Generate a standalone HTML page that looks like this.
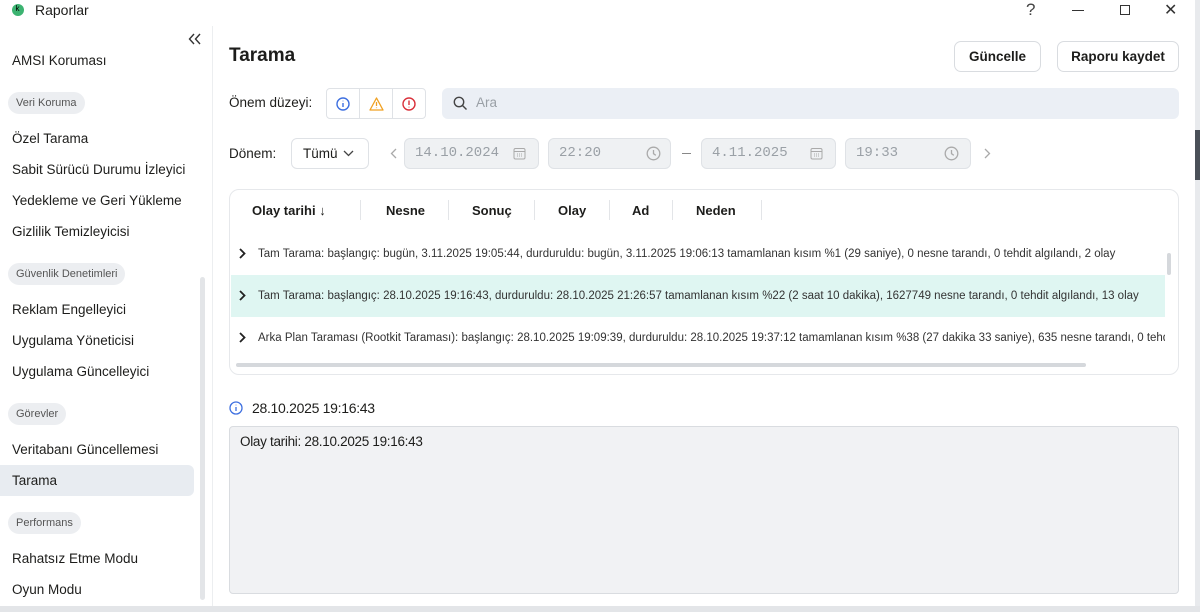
<!DOCTYPE html>
<html><head><meta charset="utf-8"><style>
*{margin:0;padding:0;box-sizing:border-box}
body{width:1200px;height:612px;overflow:hidden;background:#fff;font-family:"Liberation Sans",sans-serif;color:#1d1d1b;position:relative}
.a{position:absolute;white-space:nowrap}
.side{font-size:13.5px;left:12px}
.pill{position:absolute;left:8px;height:22px;border-radius:11px;background:#eceef1;font-size:11px;color:#555;padding:0 8px;line-height:22px}
.btn{position:absolute;top:41px;height:31px;border:1px solid #d9dce0;border-radius:7px;font-size:13.5px;font-weight:bold;text-align:center;line-height:29px}
.fld{position:absolute;top:138px;height:31px;background:#eff1f3;border:1px solid #dfe2e6;border-radius:6px;font-family:"Liberation Mono",monospace;font-size:14px;color:#9aa0a6;line-height:29px;padding-left:10px}
.th{position:absolute;top:203px;font-size:13px;font-weight:bold}
.sep{position:absolute;top:200px;width:1px;height:20px;background:#e3e5e8}
.row{position:absolute;left:231px;width:934px;height:42px;font-size:11.5px;line-height:42px;padding-left:27px;color:#333;overflow:hidden;white-space:nowrap}
.chev{position:absolute;left:8px;top:15px}
</style></head><body>
<!-- title bar -->
<div class="a" style="left:12px;top:4px;width:12px;height:12px;border-radius:50%;background:#3cb371"></div>
<div class="a" style="left:15.5px;top:4px;font-size:8px;color:#000">k</div>
<div class="a" style="left:35px;top:2px;font-size:14px">Raporlar</div>
<div class="a" style="left:1026px;top:0;font-size:17px;color:#444">?</div>
<div class="a" style="left:1072px;top:10px;width:12px;height:1px;background:#333"></div>
<div class="a" style="left:1120px;top:5px;width:10px;height:10px;border:1px solid #333"></div>
<div class="a" style="left:1164px;top:0px;font-size:16px;color:#333">✕</div>
<div class="a" style="left:1195px;top:0;width:5px;height:612px;background:#e8eaed"></div>
<div class="a" style="left:1195px;top:130px;width:5px;height:50px;background:#4a5058"></div>
<!-- sidebar -->
<div class="a" style="left:212px;top:26px;width:1px;height:586px;background:#eceef0"></div>
<svg class="a" style="left:188px;top:33px" width="14" height="12" viewBox="0 0 14 12"><path d="M6 1L1.5 6 6 11M12 1L7.5 6 12 11" fill="none" stroke="#333" stroke-width="1.4"/></svg>
<div class="a side" style="top:53px">AMSI Koruması</div>
<div class="pill" style="top:92px">Veri Koruma</div>
<div class="a side" style="top:131px">Özel Tarama</div>
<div class="a side" style="top:162px">Sabit Sürücü Durumu İzleyici</div>
<div class="a side" style="top:193px">Yedekleme ve Geri Yükleme</div>
<div class="a side" style="top:224px">Gizlilik Temizleyicisi</div>
<div class="pill" style="top:263px">Güvenlik Denetimleri</div>
<div class="a side" style="top:302px">Reklam Engelleyici</div>
<div class="a side" style="top:333px">Uygulama Yöneticisi</div>
<div class="a side" style="top:364px">Uygulama Güncelleyici</div>
<div class="pill" style="top:403px">Görevler</div>
<div class="a side" style="top:442px">Veritabanı Güncellemesi</div>
<div class="a" style="left:0;top:465px;width:194px;height:31px;background:#e8ecf1;border-radius:0 6px 6px 0"></div>
<div class="a side" style="top:473px">Tarama</div>
<div class="pill" style="top:512px">Performans</div>
<div class="a side" style="top:551px">Rahatsız Etme Modu</div>
<div class="a side" style="top:582px">Oyun Modu</div>
<div class="a" style="left:200px;top:277px;width:5px;height:323px;background:#e3e5e8;border-radius:3px"></div>
<div class="a" style="left:0;top:606px;width:1200px;height:6px;background:#e3e5e8"></div>
<!-- header -->
<div class="a" style="left:229px;top:45px;font-size:19px;font-weight:bold">Tarama</div>
<div class="btn" style="left:954px;width:87px">Güncelle</div>
<div class="btn" style="left:1057px;width:122px">Raporu kaydet</div>
<!-- severity -->
<div class="a" style="left:229px;top:95px;font-size:13.5px">Önem düzeyi:</div>
<div class="a" style="left:326px;top:88px;width:100px;height:31px;border:1px solid #dfe2e6;border-radius:4px;display:flex">
 <div style="flex:1;border-right:1px solid #dfe2e6;display:flex;align-items:center;justify-content:center"><svg width="14" height="14" viewBox="0 0 14 14"><circle cx="7" cy="7" r="6" fill="none" stroke="#3d6fe0" stroke-width="1.4"/><path d="M7 6v4M7 3.8v.5" stroke="#3d6fe0" stroke-width="1.4"/></svg></div>
 <div style="flex:1;border-right:1px solid #dfe2e6;display:flex;align-items:center;justify-content:center"><svg width="15" height="14" viewBox="0 0 15 14"><path d="M7.5 1L14 13H1z" fill="none" stroke="#f0a020" stroke-width="1.3" stroke-linejoin="round"/><path d="M7.5 5v4M7.5 10.5v.6" stroke="#f0a020" stroke-width="1.3"/></svg></div>
 <div style="flex:1;display:flex;align-items:center;justify-content:center"><svg width="14" height="14" viewBox="0 0 14 14"><circle cx="7" cy="7" r="6" fill="none" stroke="#d9303a" stroke-width="1.4"/><path d="M7 3.5v4.5M7 9.8v.6" stroke="#d9303a" stroke-width="1.4"/></svg></div>
</div>
<div class="a" style="left:442px;top:88px;width:737px;height:31px;background:#ebeff5;border-radius:6px"></div>
<svg class="a" style="left:453px;top:96px" width="15" height="15" viewBox="0 0 15 15"><circle cx="6" cy="6" r="4.7" fill="none" stroke="#444" stroke-width="1.4"/><path d="M9.5 9.5L13.5 13.5" stroke="#444" stroke-width="1.4"/></svg>
<div class="a" style="left:476px;top:95px;font-size:13.5px;color:#9aa0a6">Ara</div>
<!-- period -->
<div class="a" style="left:229px;top:146px;font-size:13.5px">Dönem:</div>
<div class="a" style="left:291px;top:138px;width:78px;height:31px;border:1px solid #dfe2e6;border-radius:6px;font-size:13.5px;line-height:29px;padding-left:11px">Tümü</div>
<svg class="a" style="left:343px;top:150px" width="11" height="7" viewBox="0 0 11 7"><path d="M1 1l4.5 4.5L10 1" fill="none" stroke="#444" stroke-width="1.3"/></svg>
<svg class="a" style="left:390px;top:148px" width="7" height="11" viewBox="0 0 7 11"><path d="M6 1L1.5 5.5 6 10" fill="none" stroke="#aaa" stroke-width="1.3"/></svg>
<div class="fld" style="left:404px;width:135px">14.10.2024</div>
<div class="fld" style="left:548px;width:123px">22:20</div>
<div class="a" style="left:682px;top:153px;width:9px;height:1px;background:#888"></div>
<div class="fld" style="left:701px;width:135px">4.11.2025</div>
<div class="fld" style="left:845px;width:126px">19:33</div>
<svg class="a" style="left:984px;top:148px" width="7" height="11" viewBox="0 0 7 11"><path d="M1 1l4.5 4.5L1 10" fill="none" stroke="#aaa" stroke-width="1.3"/></svg>
<svg class="a" style="left:513px;top:147px" width="13" height="13" viewBox="0 0 13 13"><rect x="1" y="1.5" width="11" height="10.5" rx="1.5" fill="none" stroke="#aaa"/><path d="M1 4.5h11M4 7h1M6 7h1M8 7h1M4 9h1M6 9h1M8 9h1" stroke="#aaa"/></svg>
<svg class="a" style="left:810px;top:147px" width="13" height="13" viewBox="0 0 13 13"><rect x="1" y="1.5" width="11" height="10.5" rx="1.5" fill="none" stroke="#aaa"/><path d="M1 4.5h11M4 7h1M6 7h1M8 7h1M4 9h1M6 9h1M8 9h1" stroke="#aaa"/></svg>
<svg class="a" style="left:646px;top:146px" width="15" height="15" viewBox="0 0 15 15"><circle cx="7.5" cy="7.5" r="6.3" fill="none" stroke="#aaa" stroke-width="1.3"/><path d="M7.5 4v3.7l2.3 1.6" fill="none" stroke="#aaa" stroke-width="1.3"/></svg>
<svg class="a" style="left:944px;top:146px" width="15" height="15" viewBox="0 0 15 15"><circle cx="7.5" cy="7.5" r="6.3" fill="none" stroke="#aaa" stroke-width="1.3"/><path d="M7.5 4v3.7l2.3 1.6" fill="none" stroke="#aaa" stroke-width="1.3"/></svg>
<!-- table -->
<div class="a" style="left:229px;top:189px;width:950px;height:186px;border:1px solid #e6e8eb;border-radius:10px"></div>
<div class="th" style="left:252px">Olay tarihi ↓</div>
<div class="sep" style="left:360px"></div>
<div class="th" style="left:386px">Nesne</div>
<div class="sep" style="left:448px"></div>
<div class="th" style="left:472px">Sonuç</div>
<div class="sep" style="left:534px"></div>
<div class="th" style="left:558px">Olay</div>
<div class="sep" style="left:609px"></div>
<div class="th" style="left:632px">Ad</div>
<div class="sep" style="left:672px"></div>
<div class="th" style="left:696px">Neden</div>
<div class="sep" style="left:761px"></div>
<div class="row" style="top:233px"><svg class="chev" width="7" height="11" viewBox="0 0 7 11"><path d="M1 1l4.5 4.5L1 10" fill="none" stroke="#222" stroke-width="1.8"/></svg>Tam Tarama: başlangıç: bugün, 3.11.2025 19:05:44, durduruldu: bugün, 3.11.2025 19:06:13 tamamlanan kısım %1 (29 saniye), 0 nesne tarandı, 0 tehdit algılandı, 2 olay</div>
<div class="row" style="top:275px;background:#dff6f2"><svg class="chev" width="7" height="11" viewBox="0 0 7 11"><path d="M1 1l4.5 4.5L1 10" fill="none" stroke="#222" stroke-width="1.8"/></svg>Tam Tarama: başlangıç: 28.10.2025 19:16:43, durduruldu: 28.10.2025 21:26:57 tamamlanan kısım %22 (2 saat 10 dakika), 1627749 nesne tarandı, 0 tehdit algılandı, 13 olay</div>
<div class="row" style="top:317px"><svg class="chev" width="7" height="11" viewBox="0 0 7 11"><path d="M1 1l4.5 4.5L1 10" fill="none" stroke="#222" stroke-width="1.8"/></svg>Arka Plan Taraması (Rootkit Taraması): başlangıç: 28.10.2025 19:09:39, durduruldu: 28.10.2025 19:37:12 tamamlanan kısım %38 (27 dakika 33 saniye), 635 nesne tarandı, 0 tehdit algılandı</div>
<div class="a" style="left:1167px;top:253px;width:4px;height:22px;background:#d5d8dc;border-radius:2px"></div>
<div class="a" style="left:236px;top:363px;width:850px;height:4px;background:#d5d8dc;border-radius:2px"></div>
<!-- detail -->
<svg class="a" style="left:229px;top:401px" width="14" height="14" viewBox="0 0 14 14"><circle cx="7" cy="7" r="6" fill="none" stroke="#3d6fe0" stroke-width="1.3"/><path d="M7 6v4M7 3.8v.5" stroke="#3d6fe0" stroke-width="1.3"/></svg>
<div class="a" style="left:252px;top:400px;font-size:14px;letter-spacing:-0.3px">28.10.2025 19:16:43</div>
<div class="a" style="left:229px;top:426px;width:950px;height:168px;background:#f1f2f4;border:1px solid #d9dce0;border-radius:4px"></div>
<div class="a" style="left:240px;top:434px;font-size:13.5px;letter-spacing:-0.3px">Olay tarihi: 28.10.2025 19:16:43</div>
</body></html>
